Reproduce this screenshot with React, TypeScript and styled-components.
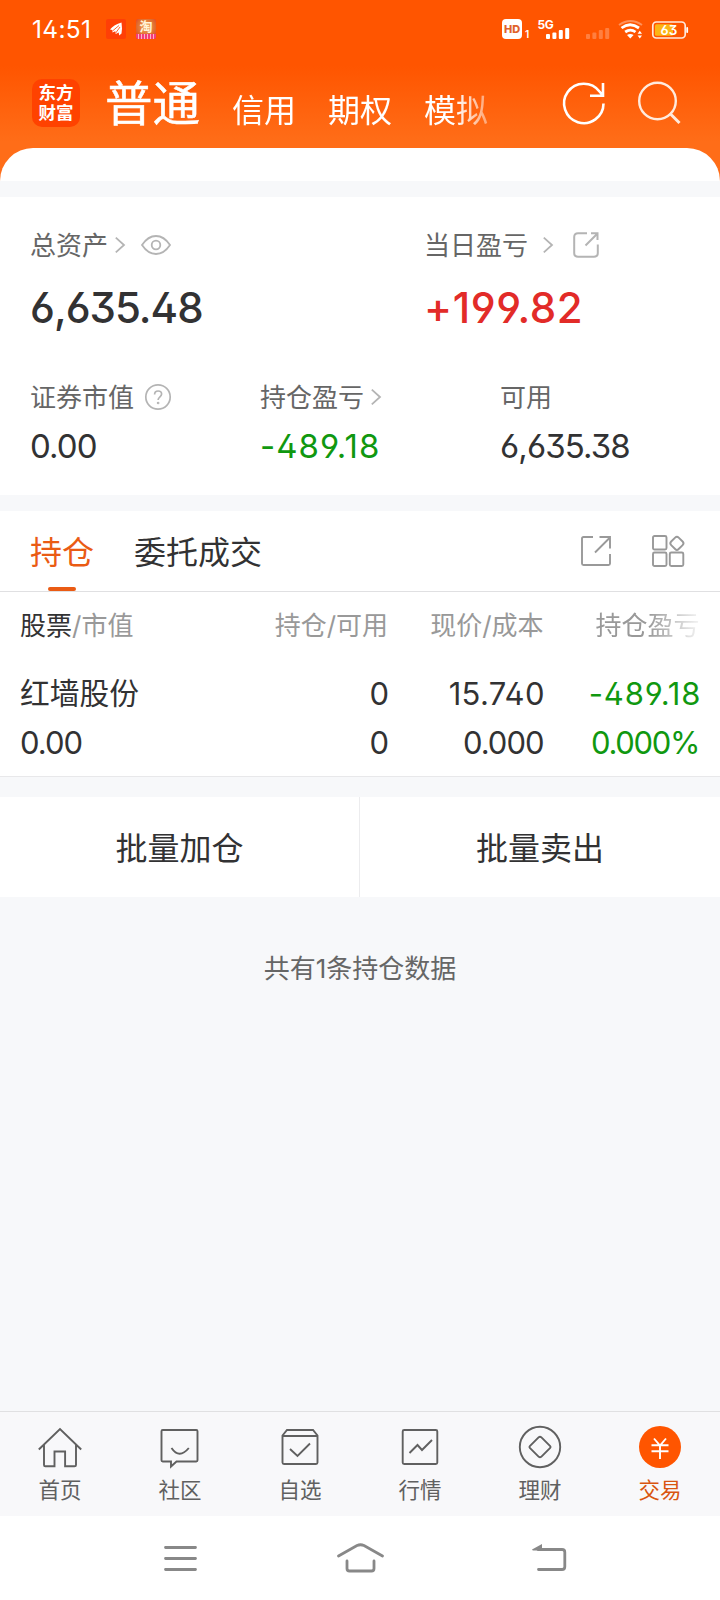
import * as React from "react";
import styled, { createGlobalStyle } from "styled-components";

const Colors = {
  Orange: "#ff5500",
  Accent: "#ea5b14",
  Page: "#f7f8fa",
  Line: "#e0e0e2",
  Text: "#323233",
  Label: "#666666",
  Muted: "#999999",
  Icon: "#b4b4b4",
  Up: "#e22b28",
  Down: "#109810",
};

const GlobalStyle = createGlobalStyle`
  * {
    box-sizing: border-box;
  }
  body {
    margin: 0;
    font-family: "Inter", "Noto Sans CJK SC", sans-serif;
    font-feature-settings: "cv03", "cv04", "ss01";
    color: ${Colors.Text};
    background: #fff;
  }
  svg {
    display: block;
    flex: none;
    overflow: visible;
  }
`;

const Screen = styled.div`
  width: 720px;
  height: 1600px;
  display: flex;
  flex-direction: column;
  background: ${Colors.Page};
  overflow: hidden;
  white-space: nowrap;
`;

const Header = styled.header`
  height: 181px;
  flex: none;
  display: flex;
  flex-direction: column;
  background: linear-gradient(#ff5500 0, #ff5500 66px, #ff6d18 142px, #ff6d18 100%);
`;

const StatusBar = styled.div`
  height: 58px;
  display: flex;
  align-items: center;
  padding: 0 33px 0 32px;
  color: #fff;
`;

const Clock = styled.span`
  width: 74px;
  font-size: 24.5px;
  letter-spacing: 0.3px;
`;

const NoticeIcons = styled.div`
  display: flex;
  gap: 10px;
  flex: 1;
`;

const PromoBadge = styled.div`
  width: 20px;
  height: 20px;
  border-radius: 2px;
  overflow: hidden;
  display: flex;
  flex-direction: column;
  align-items: center;
  background: radial-gradient(circle at 50% 40%, #f3a75c, #df6a2c 60%, #e8252b);
  color: #fff4d8;
  font-size: 13px;
  font-weight: 700;
  line-height: 15px;

  &::after {
    content: "";
    width: 20px;
    height: 5px;
    background: repeating-linear-gradient(90deg, #f23d79 0 2px, #fbb3c8 2px 3px);
  }
`;

const HdBadge = styled.span`
  width: 20px;
  height: 20px;
  border-radius: 4px;
  background: #fff;
  color: #e0632b;
  font-size: 11px;
  font-weight: 800;
  line-height: 20px;
  text-align: center;
`;

const SimIndex = styled.span`
  width: 16px;
  padding: 10px 0 0 3px;
  font-size: 10px;
  font-weight: 600;
  line-height: 10px;
`;

const NavRow = styled.div`
  height: 90px;
  display: flex;
  align-items: center;
  padding: 0 38px 0 32px;
  color: #fff;
`;

const Logo = styled.div`
  width: 48px;
  height: 48px;
  margin-right: 25px;
  border-radius: 10px;
  background: #ff4200;
  display: flex;
  flex-direction: column;
  align-items: center;
  padding-top: 4px;
  font-size: 17.5px;
  font-weight: 700;
  line-height: 20px;
`;

const AccountTabs = styled.nav`
  width: 395px;
  margin: 8px 63px 0 0;
  display: flex;
  align-items: baseline;
  gap: 32px;
  mask-image: linear-gradient(90deg, #000 350px, transparent 406px);
`;

const AccountTab = styled.span<{ $active?: boolean }>`
  font-size: ${(p) => (p.$active ? 47.5 : 32)}px;
  line-height: 60px;
  -webkit-text-stroke: ${(p) => (p.$active ? "0.5px #fff" : "0")};

  & + & {
    position: relative;
    top: 1px;
  }
`;

const NavIcons = styled.div`
  display: flex;
  gap: 32px;
`;

const SheetTop = styled.div`
  height: 33px;
  border-radius: 34px 34px 0 0;
  background: #fff;
`;

const Assets = styled.section`
  height: 298px;
  flex: none;
  margin-top: 16px;
  background: #fff;
  padding: 29px 30px 0;
`;

const AssetRow = styled.div<{ $columns: string }>`
  display: grid;
  grid-template-columns: ${(p) => p.$columns};
  & + & {
    margin-top: 44px;
  }
`;

const Label = styled.div`
  height: 40px;
  display: flex;
  align-items: center;
  font-size: 26px;
  line-height: 40px;
  color: ${Colors.Label};

  svg {
    margin-bottom: 3px;
  }
`;

const Spacer = styled.i<{ $w: number }>`
  width: ${(p) => p.$w}px;
  flex: none;
`;

const BigNumber = styled.div<{ $color?: string; $track: number }>`
  margin-top: 16px;
  height: 52px;
  font-size: 42px;
  font-weight: 550;
  line-height: 52px;
  letter-spacing: ${(p) => p.$track}px;
  color: ${(p) => p.$color || Colors.Text};
`;

const Figure = styled.div<{ $color?: string; $track?: number }>`
  margin-top: 7px;
  height: 42px;
  font-size: 33px;
  line-height: 42px;
  letter-spacing: ${(p) => p.$track ?? -0.9}px;
  color: ${(p) => p.$color || Colors.Text};
`;

const Holdings = styled.section`
  height: 266px;
  flex: none;
  margin-top: 16px;
  background: #fff;
  border-bottom: 1px solid #e8e8ea;
`;

const TabBar = styled.div`
  height: 81px;
  display: flex;
  align-items: center;
  padding: 0 35px 0 30px;
  border-bottom: 1px solid ${Colors.Line};
`;

const Tab = styled.div<{ $active?: boolean }>`
  height: 80px;
  margin-right: 40px;
  display: flex;
  flex-direction: column;
  align-items: center;
  font-size: 32px;
  line-height: 84px;
  color: ${(p) => (p.$active ? Colors.Accent : Colors.Text)};

  &::after {
    content: "";
    width: 28px;
    height: 4px;
    margin-top: -8px;
    flex: none;
    border-radius: 2px;
    background: ${(p) => (p.$active ? Colors.Accent : "transparent")};
  }
`;

const TabTools = styled.div`
  margin-left: auto;
  display: flex;
  align-items: center;
  gap: 41px;
`;

const TableRow = styled.div<{ $height: number; $size: number; $color?: string }>`
  height: ${(p) => p.$height}px;
  line-height: ${(p) => p.$height}px;
  font-size: ${(p) => p.$size}px;
  color: ${(p) => p.$color || Colors.Text};
  display: grid;
  grid-template-columns: 198px 170px 155.500px 156px;
  padding-left: 20px;
`;

const Cell = styled.span<{ $color?: string; $faded?: boolean }>`
  text-align: right;
  color: ${(p) => p.$color || "inherit"};
  mask-image: ${(p) => (p.$faded ? "linear-gradient(90deg, #000 104px, transparent 162px)" : "none")};

  &:first-child {
    text-align: left;
  }
`;

const NumCell = styled(Cell)<{ $track?: number }>`
  font-size: 31px;
  letter-spacing: ${(p) => p.$track ?? -1}px;
  margin-right: ${(p) => -1 - (p.$track ?? -1)}px;
`;

const Strong = styled.span`
  color: ${Colors.Text};
`;

const Actions = styled.div`
  height: 100px;
  flex: none;
  margin-top: 20px;
  display: grid;
  grid-template-columns: 359px 361px;
  background: #fff;
`;

const Action = styled.div`
  height: 100px;
  font-size: 32px;
  line-height: 103px;
  text-align: center;
  & + & {
    border-left: 1px solid #ececee;
  }
`;

const Summary = styled.p`
  flex: 1;
  margin: 0;
  padding-top: 51px;
  text-align: center;
  font-size: 26px;
  line-height: 42px;
  color: ${Colors.Label};
`;

const BottomBar = styled.nav`
  height: 105px;
  flex: none;
  display: grid;
  grid-template-columns: repeat(6, 1fr);
  border-top: 1px solid ${Colors.Line};
  background: #f8f8fa;
`;

const BottomItem = styled.div<{ $active?: boolean }>`
  display: flex;
  flex-direction: column;
  align-items: center;
  padding-top: 14px;
  font-size: 21.5px;
  line-height: 30px;
  color: ${(p) => (p.$active ? "#d95510" : "#606060")};

  svg {
    margin-bottom: 7px;
  }
`;

const SystemNav = styled.div`
  height: 84px;
  flex: none;
  display: grid;
  grid-template-columns: 173px 187px 191px;
  justify-items: center;
  align-items: center;
  padding-left: 94px;
  background: #fff;
`;

const Chevron = () => (
  <svg width="10" height="16" fill="none" stroke={Colors.Icon} strokeWidth="1.8">
    <path d="M.8.6 9 8 .8 15.4" />
  </svg>
);

const EyeIcon = () => (
  <svg width="30" height="20" fill="none" stroke={Colors.Icon} strokeWidth="1.8">
    <path d="M1 10C5 4 9.500 1 15 1s10 3 14 9c-4 6-8.500 9-14 9S5 16 1 10z" />
    <circle cx="15" cy="10" r="4.300" />
  </svg>
);

const ShareRoundIcon = () => (
  <svg width="26" height="26" fill="none" stroke={Colors.Icon} strokeWidth="2">
    <path d="M14 1.200H5Q1.200 1.200 1.200 5v16Q1.200 24.800 5 24.800h16Q24.800 24.800 24.800 21v-8.500M12.500 13.500 24 2M18 1.200h6.500V8" />
  </svg>
);

const HelpIcon = () => (
  <svg width="26" height="26" fill="none" stroke={Colors.Icon} strokeWidth="1.700">
    <circle cx="13" cy="13" r="12.200" />
    <path d="M9.600 10.500c0-4.800 7-4.400 7-.4 0 2.700-3.500 2.900-3.500 6" />
    <circle cx="13.100" cy="19" r=".5" />
  </svg>
);

const ShareIcon = () => (
  <svg width="30" height="30" fill="none" stroke={Colors.Muted} strokeWidth="1.900">
    <path d="M12 1H2.500Q1 1 1 2.500v25Q1 29 2.500 29h25Q29 29 29 27.500V18M14 16.500 29 1.500M18.500 1H29v11.500" />
  </svg>
);

const GridIcon = () => (
  <svg width="33" height="32" fill="none" stroke={Colors.Muted} strokeWidth="1.900">
    <rect x="1" y="1" width="13.500" height="13.500" rx="1.500" />
    <rect x="1" y="17.500" width="13.500" height="13.500" rx="1.500" />
    <rect x="17.800" y="17.500" width="13.500" height="13.500" rx="1.500" />
    <rect x="19.600" y="3" width="10.600" height="10.600" rx="2.500" transform="rotate(45 24.900 8.300)" />
  </svg>
);

const StatusIcons = () => (
  <svg width="149" height="20" fill="#fff">
    <text x="-.5" y="9.600" fontSize="12" fontWeight="700" letterSpacing="-.5">5G</text>
    {[5, 6.500, 9, 11].map((h, i) => (
      <rect key={i} x={8 + i * 6.400} y={20 - h} width="4" height={h} rx="1" />
    ))}
    {[5, 6.500, 9, 11].map((h, i) => (
      <rect key={i} x={48 + i * 6.400} y={20 - h} width="4" height={h} rx="1" opacity=".25" />
    ))}
    <g fill="none" stroke="#fff">
      <path d="M81 6q11.500-8 23 0" strokeWidth="2" opacity=".35" />
      <path d="M83.500 9q8.500-6.500 17.500 0M87.200 13q5.300-3.800 10.300 0" strokeWidth="2.800" />
    </g>
    <path d="M89 16q3.300-2.200 6.600 0L92.300 19.500zM99.600 14.800l2.200-3 2.200 3zM99.600 16.500l2.200 3 2.200-3z" />
    <rect x="114.800" y="3" width="32.400" height="16" rx="3.500" fill="none" stroke="#ffe9dc" strokeWidth="1.700" />
    <rect x="117" y="5.200" width="18" height="11.600" rx="1.500" fill="#fdb514" />
    <rect x="148.300" y="8" width="1.800" height="6" rx=".9" />
    <text x="122.500" y="15.700" fontSize="13.500" fontWeight="600">63</text>
  </svg>
);

const tabs = [
  {
    name: "首页",
    icon: <path d="M.8 27.500 22 7l21.200 20.500M6 23v20q0 1.300 1.300 1.300H16.500V29.500h10.600v14.800H36.500q1.500 0 1.500-1.300V23" />,
  },
  {
    name: "社区",
    icon: (
      <>
        <path d="M4.700 8h33.600q1.200 0 1.200 1.200v29.100q0 1.200-1.200 1.200H18.500L13 44.500v-5H4.700q-1.200 0-1.200-1.200V9.200q0-1.200 1.200-1.200z" />
        <path d="M13.500 26q7.800 11.500 17.300 0" />
      </>
    ),
  },
  {
    name: "自选",
    icon: (
      <>
        <path d="M4.500 13.500 9 8h26l4.500 5.500V40.500q0 1.500-1.500 1.500H6q-1.500 0-1.500-1.500zM4.500 14h35" />
        <path d="m12 27 7.500 7L32 21.500" />
      </>
    ),
  },
  {
    name: "行情",
    icon: (
      <>
        <rect x="4.700" y="8" width="34.600" height="34" rx="1.500" />
        <path d="m11.500 31 8-8 4.500 5 10-10" />
      </>
    ),
  },
  {
    name: "理财",
    icon: (
      <>
        <circle cx="22" cy="25" r="20.200" />
        <path d="m20.800 15.200-9 9q-.8.800 0 1.600l9 9q1.200 1 2.400 0l9-9q.8-.8 0-1.600l-9-9q-1.200-1-2.400 0z" />
      </>
    ),
  },
  {
    name: "交易",
    active: true,
    icon: (
      <>
        <circle cx="22" cy="25" r="21" fill={Colors.Orange} stroke="none" />
        <path d="m16 16.500 6 7 6-7M13.500 23.300h17M13.500 29.200h17M22 23.500V37" stroke="#fff" />
      </>
    ),
  },
];

class App extends React.Component {
  public render() {
    return (
      <Screen>
        <GlobalStyle />
        <Header>
          <StatusBar>
            <Clock>14:51</Clock>
            <NoticeIcons>
              <svg width="20" height="20">
                <rect width="20" height="20" rx="2" fill="#ff3f06" />
                <path d="M4 10.500Q8 5.500 15.500 3.500l.5 6-.5 5-2.300 2-.5-3-3 1.500-.4-2.800-2.800 1.300-.2-2.400z" fill="#fff" />
                <path d="m6.500 12 6.500-5.500M9.700 14 14 8" stroke="#ff3f06" strokeWidth=".8" />
              </svg>
              <PromoBadge>淘</PromoBadge>
            </NoticeIcons>
            <HdBadge>HD</HdBadge>
            <SimIndex>1</SimIndex>
            <StatusIcons />
          </StatusBar>
          <NavRow>
            <Logo>
              <span>东方</span>
              <span>财富</span>
            </Logo>
            <AccountTabs>
              <AccountTab $active>普通</AccountTab>
              <AccountTab>信用</AccountTab>
              <AccountTab>期权</AccountTab>
              <AccountTab>模拟</AccountTab>
            </AccountTabs>
            <NavIcons>
              <svg width="43" height="42" fill="none" stroke="#fff" strokeWidth="2.600">
                <path d="M40.500 21.500A19.700 19.700 0 1 1 36.500 9.500L39.500 13M40 1v12.800H27" />
              </svg>
              <svg width="42" height="42" fill="none" stroke="#ffeadd" strokeWidth="2.400">
                <circle cx="19.500" cy="19" r="18.300" />
                <path d="m32 31.500 9.500 9.500" strokeWidth="3" />
              </svg>
            </NavIcons>
          </NavRow>
          <SheetTop />
        </Header>

        <Assets>
          <AssetRow $columns="394px 1fr">
            <div>
              <Label>
                总资产<Spacer $w={7} /><Chevron /><Spacer $w={16} /><EyeIcon />
              </Label>
              <BigNumber $track={-1}>6,635.48</BigNumber>
            </div>
            <div>
              <Label>
                当日盈亏<Spacer $w={15} /><Chevron /><Spacer $w={20} /><ShareRoundIcon />
              </Label>
              <BigNumber $color={Colors.Up} $track={0.6}>+199.82</BigNumber>
            </div>
          </AssetRow>
          <AssetRow $columns="230px 240px 1fr">
            <div>
              <Label>
                证券市值<Spacer $w={11} /><HelpIcon />
              </Label>
              <Figure>0.00</Figure>
            </div>
            <div>
              <Label>
                持仓盈亏<Spacer $w={7} /><Chevron />
              </Label>
              <Figure $color={Colors.Down} $track={1}>-489.18</Figure>
            </div>
            <div>
              <Label>可用</Label>
              <Figure>6,635.38</Figure>
            </div>
          </AssetRow>
        </Assets>

        <Holdings>
          <TabBar>
            <Tab $active>持仓</Tab>
            <Tab>委托成交</Tab>
            <TabTools>
              <ShareIcon />
              <GridIcon />
            </TabTools>
          </TabBar>
          <TableRow $height={68} $size={26} $color={Colors.Muted}>
            <Cell><Strong>股票</Strong>/市值</Cell>
            <Cell>持仓/可用</Cell>
            <Cell>现价/成本</Cell>
            <Cell $faded>持仓盈亏</Cell>
          </TableRow>
          <TableRow $height={67} $size={29.75}>
            <Cell>红墙股份</Cell>
            <NumCell>0</NumCell>
            <NumCell $track={0.3}>15.740</NumCell>
            <NumCell $color={Colors.Down} $track={0.9}>-489.18</NumCell>
          </TableRow>
          <TableRow $height={31} $size={31}>
            <NumCell>0.00</NumCell>
            <NumCell>0</NumCell>
            <NumCell>0.000</NumCell>
            <NumCell $color={Colors.Down} $track={-1.3}>0.000%</NumCell>
          </TableRow>
        </Holdings>

        <Actions>
          <Action>批量加仓</Action>
          <Action>批量卖出</Action>
        </Actions>
        <Summary>共有1条持仓数据</Summary>

        <BottomBar>
          {tabs.map((tab) => (
            <BottomItem key={tab.name} $active={tab.active}>
              <svg width="44" height="42" viewBox="0 4 44 42" fill="none" stroke="#606060" strokeWidth="1.900">
                {tab.icon}
              </svg>
              {tab.name}
            </BottomItem>
          ))}
        </BottomBar>

        <SystemNav>
          <svg width="35" height="26" stroke="#888" strokeWidth="2.800" strokeLinecap="round">
            <path d="M2.500 2.500H32.500M2.500 13.500H32.500M2.500 24.500H32.500" />
          </svg>
          <svg width="46" height="30" fill="none" stroke="#888" strokeWidth="2.800" strokeLinecap="round">
            <path d="M.5 13 19 2.500q3.500-1.500 7 0L44.500 13M9 18v7.500q0 2.500 2.500 2.500h22q2.500 0 2.500-2.500V18" />
          </svg>
          <svg width="35" height="28" fill="none" stroke="#888" strokeWidth="2.800" strokeLinecap="round">
            <path d="M6 5.500h24q2.800 0 2.800 2.800v14.400q0 2.800-2.800 2.800H6.500" />
            <path d="M0 5.500 10 0V6.500H.8z" fill="#888" stroke="none" />
          </svg>
        </SystemNav>
      </Screen>
    );
  }
}

export default App;
